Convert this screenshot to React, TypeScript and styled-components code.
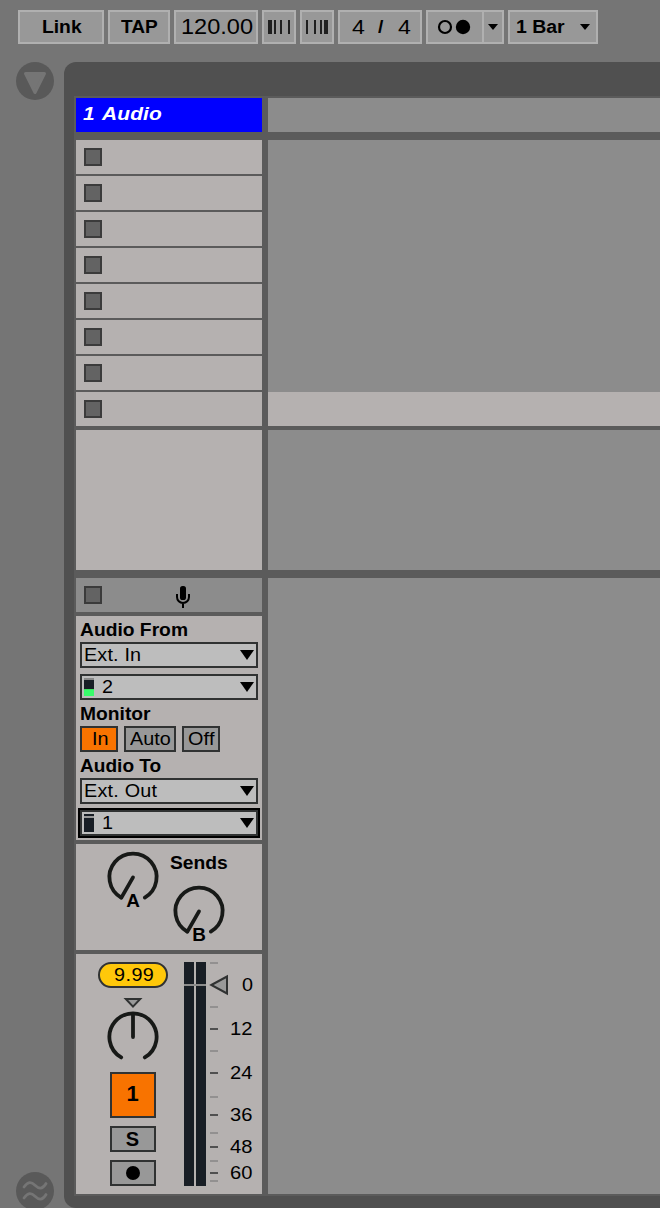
import React from "react";
import styled, { createGlobalStyle } from "styled-components";

const GlobalStyle = createGlobalStyle`
  * { box-sizing: border-box; }
  html, body { margin: 0; padding: 0; background: #757575; overflow: hidden; }
  body { font-family: "Liberation Sans", Arial, sans-serif; color: #000; }
  svg { display: block; flex: none; }
`;

const Screen = styled.div`
  width: 660px;
  height: 1208px;
  overflow: hidden;
  display: flex;
  flex-direction: column;
  background: #757575;
`;

const Toolbar = styled.header`
  display: flex;
  flex: none;
  gap: 4px;
  height: 62px;
  padding: 10px 0 0 18px;
`;

const Control = styled.div<{ $w: number; $pad?: number }>`
  display: flex;
  flex: none;
  align-items: center;
  width: ${(p) => p.$w}px;
  height: 34px;
  padding-left: ${(p) => p.$pad ?? 0}px;
  border: 2px solid #b0b0b0;
  background: #989898;
`;

const Divider = styled.div`
  width: 2px;
  height: 30px;
  background: #b0b0b0;
`;

const Label = styled.span<{
  $size?: number;
  $bold?: boolean;
  $stretch?: number;
  $track?: number;
  $color?: string;
  $italic?: boolean;
  $lift?: number;
  $w?: number;
}>`
  display: block;
  flex: none;
  width: ${(p) => (p.$w ? `${p.$w}px` : "auto")};
  margin-bottom: ${(p) => (p.$lift ?? 0) * 2}px;
  white-space: pre;
  font-size: ${(p) => p.$size ?? 18}px;
  font-weight: ${(p) => (p.$bold ? 700 : 400)};
  font-style: ${(p) => (p.$italic ? "italic" : "normal")};
  letter-spacing: ${(p) => p.$track ?? 0}px;
  color: ${(p) => p.$color ?? "#000"};
  transform: scaleX(${(p) => p.$stretch ?? 1.1});
  transform-origin: left center;
`;

const TrackName = styled(Label)`
  word-spacing: 2px;
`;

const Main = styled.main`
  display: flex;
  flex: none;
`;

const Rail = styled.aside`
  display: flex;
  flex: none;
  flex-direction: column;
  justify-content: space-between;
  width: 64px;
  height: 1148px;
  padding-left: 16px;
`;

const Frame = styled.section`
  flex: none;
  width: 610px;
  height: 1146px;
  padding: 34px 0 0 10px;
  border-radius: 12px;
  background: #505050;
`;

const Session = styled.div`
  display: flex;
  gap: 6px;
  height: 1100px;
  padding: 2px 0 2px 2px;
  background: #5b5b5b;
`;

const Track = styled.div`
  display: flex;
  flex: none;
  flex-direction: column;
  width: 186px;
`;

const DropArea = styled.div`
  display: flex;
  flex-direction: column;
  flex: 1;
`;

const Cell = styled.div<{ $h: number; $gap?: number; $bg?: string; $pad?: number }>`
  display: flex;
  flex: none;
  align-items: center;
  height: ${(p) => p.$h}px;
  margin-bottom: ${(p) => p.$gap ?? 0}px;
  padding-left: ${(p) => p.$pad ?? 0}px;
  background: ${(p) => p.$bg ?? "#b5b1b0"};
`;

const StopButton = styled.button`
  width: 18px;
  height: 18px;
  padding: 0;
  border: 2px solid #3b3b3b;
  border-radius: 0;
  background: #636363;
`;

const Routing = styled.div`
  flex: none;
  height: 224px;
  margin-bottom: 4px;
  padding: 0 4px;
  background: #b5b1b0;
`;

const Heading = styled.div`
  height: 26px;
  line-height: 29px;
`;

const Select = styled.div<{ $focus?: boolean; $gap?: number }>`
  display: flex;
  align-items: center;
  height: 26px;
  margin-bottom: ${(p) => p.$gap ?? 0}px;
  padding: 0 2px;
  border: 2px solid #303232;
  background: #bdbdbd;
  box-shadow: ${(p) => (p.$focus ? "0 0 0 2px #000" : "none")};
`;

const Arrow = styled.svg`
  margin-left: auto;
`;

const Level = styled.div<{ $live?: boolean }>`
  width: 10px;
  height: 18px;
  margin-right: 8px;
  background: ${(p) =>
    p.$live
      ? "linear-gradient(#888 0 2px, #181e25 2px 11px, #3ce05f 11px 12px, #38fc6b 12px)"
      : "linear-gradient(#181e25 0 2px, #999 2px 4px, #181e25 4px)"};
`;

const MonitorRow = styled.div`
  display: flex;
  gap: 6px;
`;

const Toggle = styled.div<{ $w: number; $pad: number; $on?: boolean }>`
  display: flex;
  align-items: center;
  width: ${(p) => p.$w}px;
  height: 26px;
  padding-left: ${(p) => p.$pad}px;
  border: 2px solid #303232;
  background: ${(p) => (p.$on ? "#f87300" : "#989898")};
`;

const Sends = styled.div`
  display: flex;
  flex: none;
  height: 106px;
  margin-bottom: 4px;
  padding: 6px 0 0 29px;
  background: #b5b1b0;
`;

const SendColumn = styled.div`
  width: 66px;
`;

const SendTitle = styled.div`
  height: 34px;
  line-height: 27px;
  margin-left: -1px;
`;

const Mixer = styled.div`
  display: flex;
  flex: none;
  height: 240px;
  padding-top: 8px;
  background: #b5b1b0;
`;

const MixerButtons = styled.div`
  display: flex;
  flex-direction: column;
  align-items: center;
  width: 70px;
  margin-left: 22px;
  margin-right: 16px;
`;

const Volume = styled.div`
  display: flex;
  align-items: center;
  width: 70px;
  height: 26px;
  padding-left: 14px;
  border: 2px solid #303232;
  border-radius: 13px;
  background: #ffc80a;
`;

const MixButton = styled.div<{ $h: number; $gap?: number; $on?: boolean }>`
  display: flex;
  flex: none;
  align-items: center;
  justify-content: center;
  width: 46px;
  height: ${(p) => p.$h}px;
  margin-bottom: ${(p) => p.$gap ?? 0}px;
  padding-right: 1px;
  border: 2px solid #303232;
  background: ${(p) => (p.$on ? "#f87300" : "#989898")};
`;

const clips = [0, 1, 2, 3, 4, 5, 6, 7];
const minorTicks = [1, 45, 89, 135, 171, 199, 219];
const majorTicks: [number, string][] = [
  [67, "12"],
  [111, "24"],
  [153, "36"],
  [185, "48"],
  [211, "60"],
];

const Caret = () => (
  <svg width="10" height="6" viewBox="0 0 10 6">
    <path d="M0 0H10L5 6Z" />
  </svg>
);

const DropArrow = () => (
  <Arrow width="14" height="10" viewBox="0 0 14 10">
    <path d="M0 0H14L7 10Z" />
  </Arrow>
);

const SendKnob = ({ name }: { name: string }) => (
  <svg width="56" height="60" viewBox="0 0 56 60">
    <g fill="none" stroke="#171917" strokeWidth="3.8" strokeLinecap="round">
      <path d="M16.2 47.6A23.6 23.6 0 1 1 39.8 47.6" />
      <path d="M28 27.4L16.4 47.6" />
    </g>
    <text x="28" y="57.4" textAnchor="middle" fontSize="17.5" fontWeight="700" transform="translate(-2.2 0) scale(1.08 1)">
      {name}
    </text>
  </svg>
);

const PanKnob = () => (
  <svg width="56" height="84" viewBox="0 0 56 84">
    <path d="M20.8 11H35.2L28 18.6Z" fill="#999" stroke="#303232" strokeWidth="2" />
    <g fill="none" stroke="#171917" strokeWidth="3.8" strokeLinecap="round">
      <path d="M16.2 69.4A23.6 23.6 0 1 1 39.8 69.4" />
      <path d="M28 27V49" />
    </g>
  </svg>
);

const Meter = () => (
  <svg width="78" height="226" viewBox="0 0 78 226">
    <path d="M0 0H10V224H0ZM12 0H22V224H12Z" fill="#181e25" />
    <path d="M0 22H22V24H0Z" fill="#8c8c8c" />
    {minorTicks.map((y) => (
      <rect key={y} x="26" y={y - 1} width="8" height="2" fill="#929090" />
    ))}
    {majorTicks.map(([y]) => (
      <rect key={y} x="26" y={y - 1} width="8" height="2" fill="#505050" />
    ))}
    <path d="M27.3 23L43 14.5V31.5Z" fill="#999" stroke="#303232" strokeWidth="2" />
    <g fontSize="18" textAnchor="end">
      <text transform="translate(69 29.4) scale(1.1 1)">0</text>
      {majorTicks.map(([y, value]) => (
        <text key={value} transform={`translate(68.4 ${y + 6.4}) scale(1.12 1)`}>
          {value}
        </text>
      ))}
    </g>
  </svg>
);

const Microphone = () => (
  <svg width="14" height="26" viewBox="0 -4 14 26">
    <rect x="4" y="0" width="6" height="14" rx="2.6" />
    <path d="M1 8V11A6 6 0 0 0 13 11V8M7 17V22" fill="none" stroke="#000" strokeWidth="2" />
  </svg>
);

export default function App() {
  return (
    <>
      <GlobalStyle />
      <Screen>
        <Toolbar>
          <Control $w={86} $pad={22}>
            <Label $bold $stretch={1.07}>Link</Label>
          </Control>
          <Control $w={62} $pad={11}>
            <Label $bold $stretch={1.06}>TAP</Label>
          </Control>
          <Control $w={84} $pad={5}>
            <Label $size={22} $stretch={1.07}>120.00</Label>
          </Control>
          <Control $w={34} $pad={4}>
            <svg width="22" height="14" viewBox="0 0 22 14">
              <path d="M0 0H4V14H0ZM6 0H8V14H6ZM12 0H14V14H12ZM20 0H22V14H20Z" fill="#202020" />
            </svg>
          </Control>
          <Control $w={34} $pad={4}>
            <svg width="22" height="14" viewBox="0 0 22 14">
              <path d="M0 0H2V14H0ZM8 0H10V14H8ZM14 0H16V14H14ZM18 0H22V14H18Z" fill="#202020" />
            </svg>
          </Control>
          <Control $w={84} $pad={12}>
            <Label $size={21} $w={26}>4</Label>
            <Label $size={17.5} $w={20} $bold>/</Label>
            <Label $size={21}>4</Label>
          </Control>
          <Control $w={78} $pad={9}>
            <svg width="45" height="16" viewBox="0 0 45 16">
              <circle cx="8" cy="8" r="6" fill="none" stroke="#000" strokeWidth="2.2" />
              <circle cx="26" cy="8" r="7.2" />
            </svg>
            <Divider />
            <svg width="4" height="6" />
            <Caret />
          </Control>
          <Control $w={90} $pad={6}>
            <Label $bold $size={18} $stretch={1.08} $w={64}>1 Bar</Label>
            <Caret />
          </Control>
        </Toolbar>

        <Main>
          <Rail>
            <svg width="38" height="38" viewBox="0 0 38 38">
              <circle cx="19" cy="19" r="19" fill="#595959" />
              <path d="M9.5 11.5H28.5L19 30.5Z" fill="#757575" stroke="#757575" strokeWidth="3" strokeLinejoin="round" />
            </svg>
            <svg width="38" height="38" viewBox="0 0 38 38">
              <circle cx="19" cy="19" r="19" fill="#595959" />
              <path
                d="M8 15C12 9.6 15 9.4 19 13.2S26 17.6 30 11.6M8 26C12 20.6 15 20.4 19 24.2S26 28.6 30 22.6"
                fill="none"
                stroke="#757575"
                strokeWidth="2.8"
                strokeLinecap="round"
              />
            </svg>
          </Rail>

          <Frame>
            <Session>
              <Track>
                <Cell $h={34} $gap={8} $bg="#0000ff" $pad={7}>
                  <TrackName $size={19} $bold $italic $color="#fff" $track={0.1} $lift={1}>1 Audio</TrackName>
                </Cell>
                {clips.map((clip) => (
                  <Cell key={clip} $h={34} $gap={clip === 7 ? 4 : 2} $pad={8}>
                    <StopButton />
                  </Cell>
                ))}
                <Cell $h={140} $gap={8} />
                <Cell $h={34} $gap={4} $bg="#8c8c8c" $pad={8}>
                  <StopButton />
                  <svg width="74" height="22" />
                  <Microphone />
                </Cell>

                <Routing>
                  <Heading>
                    <Label $bold $size={17.5}>Audio From</Label>
                  </Heading>
                  <Select $gap={6}>
                    <Label $track={0.15}>Ext. In</Label>
                    <DropArrow />
                  </Select>
                  <Select>
                    <Level $live />
                    <Label>2</Label>
                    <DropArrow />
                  </Select>
                  <Heading>
                    <Label $bold $size={17.5}>Monitor</Label>
                  </Heading>
                  <MonitorRow>
                    <Toggle $w={38} $pad={10} $on>
                      <Label>In</Label>
                    </Toggle>
                    <Toggle $w={52} $pad={4}>
                      <Label>Auto</Label>
                    </Toggle>
                    <Toggle $w={38} $pad={4}>
                      <Label $track={0.2}>Off</Label>
                    </Toggle>
                  </MonitorRow>
                  <Heading>
                    <Label $bold $size={17.5} $stretch={1.09}>Audio To</Label>
                  </Heading>
                  <Select $gap={6}>
                    <Label $track={0.2}>Ext. Out</Label>
                    <DropArrow />
                  </Select>
                  <Select $focus>
                    <Level />
                    <Label>1</Label>
                    <DropArrow />
                  </Select>
                </Routing>

                <Sends>
                  <SendColumn>
                    <SendKnob name="A" />
                  </SendColumn>
                  <SendColumn>
                    <SendTitle>
                      <Label $bold $size={17.5}>Sends</Label>
                    </SendTitle>
                    <SendKnob name="B" />
                  </SendColumn>
                </Sends>

                <Mixer>
                  <MixerButtons>
                    <Volume>
                      <Label $track={0.4}>9.99</Label>
                    </Volume>
                    <PanKnob />
                    <MixButton $h={46} $gap={8} $on>
                      <Label $bold $size={22} $stretch={1} $lift={1}>1</Label>
                    </MixButton>
                    <MixButton $h={26} $gap={8}>
                      <Label $bold $size={20} $stretch={1}>S</Label>
                    </MixButton>
                    <MixButton $h={26}>
                      <svg width="14" height="14" viewBox="0 0 14 14">
                        <circle cx="7" cy="7" r="7" />
                      </svg>
                    </MixButton>
                  </MixerButtons>
                  <Meter />
                </Mixer>
              </Track>

              <DropArea>
                <Cell $h={34} $gap={8} $bg="#8c8c8c" />
                <Cell $h={252} $bg="#8c8c8c" />
                <Cell $h={34} $gap={4} />
                <Cell $h={140} $gap={8} $bg="#8c8c8c" />
                <Cell $h={616} $bg="#8c8c8c" />
              </DropArea>
            </Session>
          </Frame>
        </Main>
      </Screen>
    </>
  );
}
